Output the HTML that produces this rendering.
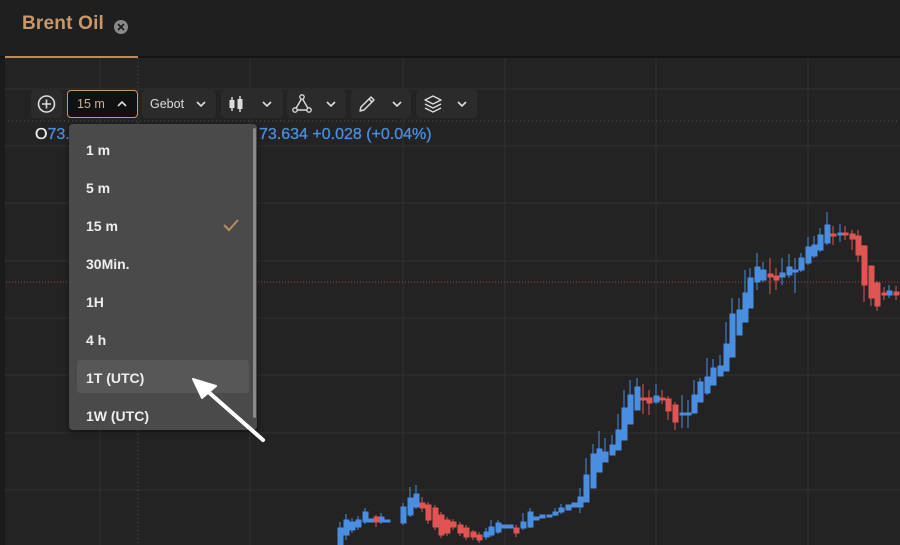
<!DOCTYPE html>
<html><head><meta charset="utf-8"><style>
*{margin:0;padding:0;box-sizing:border-box}
body{width:900px;height:545px;overflow:hidden;background:#232323;font-family:"Liberation Sans",sans-serif;position:relative}
.hdr{position:absolute;left:0;top:0;width:900px;height:58px;background:#1f1f1f;border-bottom:2px solid #141414}
.tab{position:absolute;left:22px;top:13px;font-size:19px;color:#c8976a;font-weight:bold;letter-spacing:0.2px}
.ul{position:absolute;left:5px;top:56px;width:133px;height:2px;background:#b88b62}
.btn{position:absolute;top:90px;height:28px;background:#2b2b2b;border-radius:4px;color:#ddd;font-size:13px}
.dd{position:absolute;left:69px;top:124px;width:188px;height:306px;background:#4a4a4a;border-radius:4px;box-shadow:0 2px 6px rgba(0,0,0,.5)}
.it{position:absolute;left:17px;color:#eee;font-size:14px;font-weight:bold}
.oh{position:absolute;top:126px;font-size:16px;color:#4a8ee0;-webkit-text-stroke:0.3px #4a8ee0}
</style></head><body>
<svg width="900" height="545" style="position:absolute;left:0;top:0">
<g stroke="#303030" stroke-width="1">
<line x1="100" y1="58" x2="100" y2="545"/><line x1="250" y1="58" x2="250" y2="545"/><line x1="403" y1="58" x2="403" y2="545"/><line x1="505" y1="58" x2="505" y2="545"/><line x1="656" y1="58" x2="656" y2="545"/><line x1="808" y1="58" x2="808" y2="545"/>
<line x1="0" y1="89" x2="900" y2="89"/><line x1="0" y1="146" x2="900" y2="146"/><line x1="0" y1="203" x2="900" y2="203"/><line x1="0" y1="261" x2="900" y2="261"/><line x1="0" y1="318" x2="900" y2="318"/><line x1="0" y1="375" x2="900" y2="375"/><line x1="0" y1="433" x2="900" y2="433"/><line x1="0" y1="490" x2="900" y2="490"/>
</g>
<line x1="0" y1="121" x2="900" y2="121" stroke="#555" stroke-dasharray="1,3"/>
<line x1="138" y1="58" x2="138" y2="545" stroke="#555" stroke-dasharray="1,3"/>
<line x1="0" y1="282" x2="900" y2="282" stroke="#a04848" stroke-dasharray="1,2"/>
<rect x="0" y="0" width="5" height="545" fill="#1a1a1a"/>
</svg>
<svg width="900" height="545" style="position:absolute;left:0;top:0">
<g stroke-width="1">
<g fill="#4a8ee0" stroke="#4a8ee0">
<line x1="340" y1="522" x2="340" y2="545"/><rect x="338" y="528" width="5" height="17"/>
<line x1="346" y1="514" x2="346" y2="540"/><rect x="344" y="520" width="5" height="15"/>
<line x1="352" y1="518" x2="352" y2="533"/><rect x="350" y="522" width="5" height="8"/>
<line x1="358" y1="516" x2="358" y2="530"/><rect x="356" y="520" width="5" height="7"/>
<line x1="365" y1="508" x2="365" y2="524"/><rect x="363" y="512" width="5" height="10"/>
<rect x="369" y="519" width="5" height="3"/>
<line x1="381" y1="513" x2="381" y2="524"/><rect x="379" y="517" width="5" height="5"/>
<rect x="385" y="520" width="5" height="2"/>
<line x1="403" y1="503" x2="403" y2="525"/><rect x="401" y="507" width="5" height="16"/>
<line x1="410" y1="487" x2="410" y2="517"/><rect x="408" y="498" width="5" height="17"/>
<line x1="416" y1="485" x2="416" y2="509"/><rect x="414" y="494" width="5" height="13"/>
<line x1="486" y1="528" x2="486" y2="540"/><rect x="484" y="532" width="5" height="5"/>
<line x1="491" y1="520" x2="491" y2="537"/><rect x="489" y="527" width="5" height="8"/>
<line x1="498" y1="520" x2="498" y2="534"/><rect x="496" y="523" width="5" height="9"/>
<rect x="502" y="525" width="5" height="3"/><rect x="508" y="525" width="5" height="3"/>
<line x1="523" y1="513" x2="523" y2="530"/><rect x="521" y="522" width="5" height="6"/>
<line x1="530" y1="508" x2="530" y2="528"/><rect x="528" y="512" width="5" height="15"/>
<rect x="534" y="517" width="5" height="3"/><rect x="540" y="515" width="5" height="3"/><rect x="547" y="515" width="5" height="2"/>
<line x1="555" y1="508" x2="555" y2="516"/><rect x="553" y="512" width="5" height="3"/>
<line x1="561" y1="504" x2="561" y2="514"/><rect x="559" y="508" width="5" height="4"/>
<rect x="566" y="505" width="5" height="5"/><rect x="572" y="503" width="5" height="4"/>
<line x1="580" y1="488" x2="580" y2="513"/><rect x="578" y="497" width="5" height="10"/>
<line x1="586" y1="458" x2="586" y2="502"/><rect x="584" y="475" width="5" height="27"/>
<line x1="593" y1="444" x2="593" y2="488"/><rect x="591" y="454" width="5" height="34"/>
<line x1="599" y1="431" x2="599" y2="472"/><rect x="597" y="449" width="5" height="23"/>
<line x1="605" y1="438" x2="605" y2="462"/><rect x="603" y="452" width="5" height="10"/>
<line x1="612" y1="435" x2="612" y2="455"/><rect x="610" y="445" width="5" height="10"/>
<line x1="618" y1="414" x2="618" y2="450"/><rect x="616" y="430" width="5" height="20"/>
<line x1="624" y1="390" x2="624" y2="440"/><rect x="622" y="408" width="5" height="32"/>
<line x1="630" y1="380" x2="630" y2="424"/><rect x="628" y="395" width="5" height="29"/>
<line x1="637" y1="378" x2="637" y2="410"/><rect x="635" y="387" width="5" height="23"/>
<line x1="656" y1="384" x2="656" y2="404"/><rect x="654" y="396" width="5" height="6"/>
<line x1="682" y1="395" x2="682" y2="428"/><rect x="680" y="413" width="5" height="2"/>
<line x1="688" y1="400" x2="688" y2="428"/><rect x="686" y="413" width="5" height="2"/>
<line x1="694" y1="380" x2="694" y2="413"/><rect x="692" y="395" width="5" height="18"/>
<line x1="700" y1="378" x2="700" y2="402"/><rect x="698" y="382" width="5" height="20"/>
<line x1="707" y1="358" x2="707" y2="395"/><rect x="705" y="377" width="5" height="16"/>
<line x1="713" y1="359" x2="713" y2="385"/><rect x="711" y="368" width="5" height="17"/>
<line x1="720" y1="355" x2="720" y2="376"/><rect x="718" y="366" width="5" height="10"/>
<line x1="726" y1="322" x2="726" y2="371"/><rect x="724" y="344" width="5" height="27"/>
<line x1="732" y1="298" x2="732" y2="357"/><rect x="730" y="314" width="5" height="43"/>
<line x1="739" y1="298" x2="739" y2="335"/><rect x="737" y="310" width="5" height="25"/>
<line x1="745" y1="270" x2="745" y2="322"/><rect x="743" y="293" width="5" height="29"/>
<line x1="750" y1="268" x2="750" y2="308"/><rect x="748" y="278" width="5" height="30"/>
<line x1="757" y1="253" x2="757" y2="290"/><rect x="755" y="267" width="5" height="15"/>
<line x1="763" y1="262" x2="763" y2="282"/><rect x="761" y="270" width="5" height="10"/>
<line x1="782" y1="258" x2="782" y2="285"/><rect x="780" y="273" width="5" height="4"/>
<line x1="789" y1="254" x2="789" y2="278"/><rect x="787" y="267" width="5" height="8"/>
<line x1="795" y1="258" x2="795" y2="293"/><rect x="793" y="270" width="5" height="2"/>
<line x1="801" y1="253" x2="801" y2="272"/><rect x="799" y="258" width="5" height="12"/>
<line x1="808" y1="237" x2="808" y2="265"/><rect x="806" y="247" width="5" height="16"/>
<line x1="814" y1="236" x2="814" y2="258"/><rect x="812" y="245" width="5" height="11"/>
<line x1="820" y1="228" x2="820" y2="252"/><rect x="818" y="235" width="5" height="15"/>
<line x1="827" y1="212" x2="827" y2="245"/><rect x="825" y="225" width="5" height="18"/>
<line x1="840" y1="224" x2="840" y2="242"/><rect x="838" y="233" width="5" height="2"/>
<line x1="889" y1="285" x2="889" y2="298"/><rect x="887" y="291" width="5" height="4"/>
</g>
<g fill="#e05454" stroke="#e05454">
<line x1="376" y1="515" x2="376" y2="527"/><rect x="374" y="517" width="5" height="5"/>
<line x1="422" y1="497" x2="422" y2="512"/><rect x="420" y="503" width="5" height="5"/>
<line x1="428" y1="502" x2="428" y2="524"/><rect x="426" y="505" width="5" height="15"/>
<line x1="435" y1="505" x2="435" y2="530"/><rect x="433" y="508" width="5" height="19"/>
<line x1="441" y1="512" x2="441" y2="538"/><rect x="439" y="515" width="5" height="20"/>
<line x1="447" y1="517" x2="447" y2="536"/><rect x="445" y="520" width="5" height="13"/>
<line x1="453" y1="519" x2="453" y2="530"/><rect x="451" y="522" width="5" height="5"/>
<line x1="460" y1="522" x2="460" y2="536"/><rect x="458" y="525" width="5" height="8"/>
<line x1="466" y1="525" x2="466" y2="540"/><rect x="464" y="528" width="5" height="9"/>
<line x1="473" y1="530" x2="473" y2="540"/><rect x="471" y="532" width="5" height="5"/>
<line x1="479" y1="532" x2="479" y2="543"/><rect x="477" y="535" width="5" height="5"/>
<line x1="516" y1="525" x2="516" y2="537"/><rect x="514" y="528" width="5" height="5"/>
<line x1="643" y1="384" x2="643" y2="414"/><rect x="641" y="398" width="5" height="2"/>
<line x1="649" y1="390" x2="649" y2="415"/><rect x="647" y="398" width="5" height="5"/>
<line x1="662" y1="390" x2="662" y2="404"/><rect x="660" y="398" width="5" height="2"/>
<line x1="668" y1="396" x2="668" y2="420"/><rect x="666" y="399" width="5" height="12"/>
<line x1="675" y1="402" x2="675" y2="430"/><rect x="673" y="405" width="5" height="17"/>
<line x1="770" y1="258" x2="770" y2="294"/><rect x="768" y="274" width="5" height="3"/>
<line x1="776" y1="268" x2="776" y2="290"/><rect x="774" y="276" width="5" height="4"/>
<line x1="833" y1="226" x2="833" y2="245"/><rect x="831" y="234" width="5" height="2"/>
<line x1="845" y1="226" x2="845" y2="240"/><rect x="843" y="233" width="5" height="2"/>
<line x1="852" y1="230" x2="852" y2="250"/><rect x="850" y="234" width="5" height="5"/>
<line x1="858" y1="230" x2="858" y2="262"/><rect x="856" y="236" width="5" height="19"/>
<line x1="864" y1="245" x2="864" y2="302"/><rect x="862" y="246" width="5" height="39"/>
<line x1="871" y1="266" x2="871" y2="306"/><rect x="869" y="266" width="5" height="32"/>
<line x1="877" y1="281" x2="877" y2="311"/><rect x="875" y="283" width="5" height="23"/>
<line x1="884" y1="287" x2="884" y2="300"/><rect x="882" y="293" width="5" height="2"/>
<line x1="896" y1="286" x2="896" y2="300"/><rect x="894" y="292" width="5" height="3"/>
</g>
</g>
</svg>
<div class="hdr"></div>
<div class="tab">Brent Oil</div>
<svg style="position:absolute;left:113px;top:19px" width="16" height="16"><circle cx="8" cy="8" r="7" fill="#8a8a8a"/><path d="M5 5L11 11M11 5L5 11" stroke="#1f1f1f" stroke-width="1.8"/></svg>
<div class="ul"></div>

<div class="btn" style="left:31px;width:31px"><svg width="31" height="28"><circle cx="15.5" cy="14" r="8" fill="none" stroke="#ddd" stroke-width="1.6"/><path d="M15.5 9.5V18.5M11 14H20" stroke="#ddd" stroke-width="1.6"/></svg></div>
<div class="btn" style="left:67px;width:71px;background:#111;border:1.5px solid #c49a6c;color:#c8b39c;font-size:12.5px"><span style="position:absolute;left:9px;top:6px">15 m</span><svg style="position:absolute;left:48px;top:8px" width="12" height="10"><path d="M2 7L6 3L10 7" fill="none" stroke="#ddd" stroke-width="1.6"/></svg></div>
<div class="btn" style="left:142px;width:74px"><span style="position:absolute;left:8px;top:7px;font-size:12.5px">Gebot</span><svg style="position:absolute;left:53px;top:9px" width="12" height="10"><path d="M2 3L6 7L10 3" fill="none" stroke="#ddd" stroke-width="1.6"/></svg></div>
<div class="btn" style="left:221px;width:62px"><svg width="62" height="28"><line x1="11" y1="7" x2="11" y2="21" stroke="#ddd" stroke-width="1.4"/><rect x="8.5" y="10" width="5" height="8" fill="#ddd"/><line x1="19" y1="6" x2="19" y2="22" stroke="#ddd" stroke-width="1.4"/><rect x="16.5" y="9" width="5" height="10" fill="#ddd"/><path d="M42 12L46 16L50 12" fill="none" stroke="#ddd" stroke-width="1.6"/></svg></div>
<div class="btn" style="left:287px;width:59px"><svg width="59" height="28"><path d="M15 8L8 20H22Z" fill="none" stroke="#ddd" stroke-width="1.4"/><circle cx="15" cy="7" r="2.2" fill="#2b2b2b" stroke="#ddd" stroke-width="1.3"/><circle cx="8" cy="20" r="2.2" fill="#2b2b2b" stroke="#ddd" stroke-width="1.3"/><circle cx="22" cy="20" r="2.2" fill="#2b2b2b" stroke="#ddd" stroke-width="1.3"/><path d="M40 12L44 16L48 12" fill="none" stroke="#ddd" stroke-width="1.6"/></svg></div>
<div class="btn" style="left:351px;width:60px"><svg width="60" height="28"><path d="M9 21L10 17L20 7L23 10L13 20Z M18 9L21 12" fill="none" stroke="#ddd" stroke-width="1.5" stroke-linejoin="round"/><path d="M42 12L46 16L50 12" fill="none" stroke="#ddd" stroke-width="1.6"/></svg></div>
<div class="btn" style="left:416px;width:61px"><svg width="61" height="28"><path d="M17 6L25 10L17 14L9 10Z" fill="none" stroke="#ddd" stroke-width="1.4" stroke-linejoin="round"/><path d="M9 14L17 18L25 14M9 18L17 22L25 18" fill="none" stroke="#ddd" stroke-width="1.4" stroke-linejoin="round"/><path d="M42 12L46 16L50 12" fill="none" stroke="#ddd" stroke-width="1.6"/></svg></div>

<div class="oh" style="left:35px"><span style="color:#eee;-webkit-text-stroke:0.3px #eee">O</span>73.</div>
<div class="oh" style="left:259px">73.634 +0.028 (+0.04%)</div>

<div class="dd">
<div style="position:absolute;left:8px;top:236px;width:172px;height:33px;background:#575757;border-radius:3px"></div>
<div style="position:absolute;left:184px;top:4px;width:3px;height:290px;background:#8a8a8a;border-radius:2px"></div>
<div class="it" style="top:18px">1 m</div>
<div class="it" style="top:56px">5 m</div>
<div class="it" style="top:94px">15 m</div>
<svg style="position:absolute;left:152px;top:93px" width="20" height="16"><path d="M3 8L8 13L17 3" fill="none" stroke="#b88b62" stroke-width="2"/></svg>
<div class="it" style="top:132px">30Min.</div>
<div class="it" style="top:170px">1H</div>
<div class="it" style="top:208px">4 h</div>
<div class="it" style="top:246px">1T (UTC)</div>
<div class="it" style="top:284px">1W (UTC)</div>
</div>
<svg style="position:absolute;left:0;top:0" width="900" height="545"><line x1="263" y1="440" x2="205" y2="389" stroke="#fff" stroke-width="4" stroke-linecap="round"/><path d="M193 379L216 386L202 398Z" fill="#fff" stroke="#fff" stroke-width="2" stroke-linejoin="round"/></svg>
</body></html>
